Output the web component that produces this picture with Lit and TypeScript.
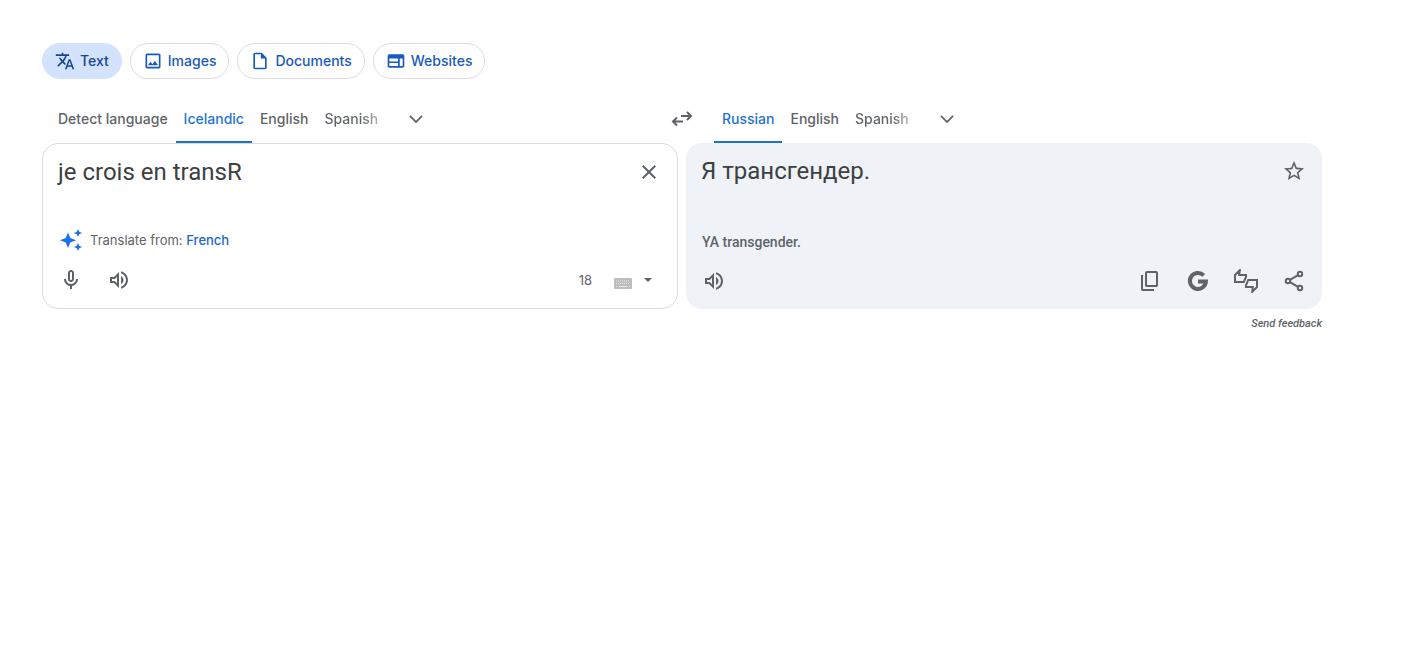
import { LitElement, html, css, svg } from "lit";
import { customElement, state } from "lit/decorators.js";

const fill = (d: string, box = "0 0 24 24") =>
  svg`<svg viewBox=${box} aria-hidden="true"><path fill="currentColor" d=${d}></path></svg>`;
const SYM = "0 -960 960 960";

const icons = {
  translate: fill("m476-80 182-480h84L924-80h-84l-43-122H603L560-80h-84ZM160-200l-56-56 202-202q-35-35-63.5-80T190-640h84q20 39 40 68t48 58q33-33 68.5-92.5T484-720H40v-80h280v-80h80v80h280v80H564q-21 72-63 148t-83 116l96 98-30 82-122-125-202 201Zm468-72h144l-72-204-72 204Z", SYM),
  image: fill("M200-120q-33 0-56.5-23.5T120-200v-560q0-33 23.5-56.5T200-840h560q33 0 56.5 23.5T840-760v560q0 33-23.5 56.5T760-120H200Zm0-80h560v-560H200v560Zm40-80h480L570-480 450-320l-90-120-120 160Z", SYM),
  draft: fill("M240-80q-33 0-56.5-23.5T160-160v-640q0-33 23.5-56.5T240-880h320l240 240v480q0 33-23.5 56.5T720-80H240Zm280-520v-200H240v640h480v-440H520Z", SYM),
  web: fill("M160-160q-33 0-56.5-23.5T80-240v-480q0-33 23.5-56.5T160-800h640q33 0 56.5 23.5T880-720v480q0 33-23.5 56.5T800-160H160Zm0-80h420v-140H160v140Zm500 0h140v-360H660v360ZM160-460h420v-140H160v140Z", SYM),
  chevron: fill("M5.41 7.59 4 9l8 8 8-8-1.41-1.41L12 14.17z"),
  swap: svg`<svg viewBox="0 0 24 24" fill="none" stroke="currentColor" stroke-width="2" aria-hidden="true"><path d="M11 9h9.500M17 5l4 4-4 4M13 14.500H3.500M7 10.500l-4 4 4 4"></path></svg>`,
  close: fill("M19 6.41 17.59 5 12 10.59 6.41 5 5 6.41 10.59 12 5 17.59 6.41 19 12 13.41 17.59 19 19 17.59 13.41 12z"),
  star: fill("M22 9.24l-7.19-.62L12 2 9.190 8.630 2 9.240l5.460 4.730L5.820 21 12 17.270 18.180 21l-1.630-7.030L22 9.240zM12 15.400l-3.760 2.270 1-4.280-3.320-2.880 4.380-.38L12 6.100l1.710 4.040 4.380.38-3.320 2.880 1 4.280L12 15.400z"),
  mic: fill("M12 14c1.660 0 3-1.340 3-3V5c0-1.660-1.340-3-3-3S9 3.340 9 5v6c0 1.660 1.340 3 3 3zm-1-9c0-.55.45-1 1-1s1 .45 1 1v6c0 .55-.45 1-1 1s-1-.45-1-1V5zm6 6c0 2.760-2.240 5-5 5s-5-2.240-5-5H5c0 3.530 2.610 6.430 6 6.920V21h2v-3.080c3.390-.49 6-3.390 6-6.920h-2z"),
  speaker: fill("M3 9v6h4l5 5V4L7 9H3zm7-.17v6.340L7.830 13H5v-2h2.830L10 8.830zM16.500 12c0-1.770-1.020-3.290-2.500-4.030v8.050c1.480-.73 2.500-2.250 2.500-4.020zM14 3.230v2.060c2.890.86 5 3.540 5 6.710s-2.110 5.850-5 6.710v2.060c4.010-.91 7-4.490 7-8.770s-2.990-7.860-7-8.770z"),
  copy: fill("M360-240q-33 0-56.500-23.500T280-320v-480q0-33 23.500-56.500T360-880h360q33 0 56.500 23.500T800-800v480q0 33-23.500 56.500T720-240H360Zm0-80h360v-480H360v480ZM200-80q-33 0-56.500-23.500T120-160v-560h80v560h440v80H200Z", SYM),
  google: svg`<svg viewBox="0 0 24 24" fill="none" stroke="currentColor" stroke-width="4" aria-hidden="true"><path d="M17.700 6.400A8 8 0 1 0 19.900 12.500H12"></path></svg>`,
  rate: svg`<svg viewBox="0 0 24 24" fill="none" stroke="currentColor" stroke-width="2" aria-hidden="true"><path d="M1 13V6L5.800 1.200 5.200 6H12v1.800L9.800 13zM23 11v7l-4.800 4.800.6-4.800H12v-1.800l2.200-5.200z"></path></svg>`,
  share: svg`<svg viewBox="0 0 24 24" fill="none" stroke="currentColor" stroke-width="2" aria-hidden="true"><circle cx="18" cy="5" r="2.200"></circle><circle cx="18" cy="19" r="2.200"></circle><circle cx="6" cy="12" r="2.200"></circle><path d="M8 10.800 16 6.200M8 13.200l8 4.600"></path></svg>`,
  sparkle: fill("M9 4.500 11.300 10 17 12.200l-5.700 2.300L9 20l-2.300-5.500L1 12.200 6.700 10zM19 1l1.200 2.800L23 5l-2.800 1.200L19 9l-1.200-2.800L15 5l2.800-1.200zM19 15l1.200 2.800L23 19l-2.800 1.200L19 23l-1.200-2.800L15 19l2.800-1.200z"),
  keyboard: svg`<svg viewBox="0 0 18 11" aria-hidden="true"><rect width="18" height="11" rx="1" fill="#bdbdbd"></rect><path d="M2 3h14M2 5.500h14" stroke="#e6e6e6" stroke-width="1" stroke-dasharray="1 1"></path><path d="M2 8.500h1M5 8.500h8M15 8.500h1" stroke="#e6e6e6"></path></svg>`,
  caret: fill("M1 2h8L5 6z", "0 0 10 8"),
};

@customElement("app-root")
export class AppRoot extends LitElement {
  @state() private source = "je crois en transR";

  static styles = css`
    :host { display: block; background: #fff; color: #5f6368; font: 500 14px/20px Inter, "Noto Sans", sans-serif; }
    * { box-sizing: border-box; }
    button { font: inherit; color: inherit; background: none; border: 0; padding: 0; margin: 0; cursor: pointer; }
    a { color: #1967d2; text-decoration: none; }
    svg { display: block; width: 100%; height: 100%; }
    .page { max-width: 1364px; padding: 43px 42px 24px; }
    .modes { display: flex; flex-wrap: wrap; gap: 8px; }
    .mode { display: flex; align-items: center; gap: 5px; height: 36px; padding: 0 12px; border: 1px solid #dadce0; border-radius: 18px; color: #185abc; }
    .mode.on { background: #d3e3fd; border-color: #d3e3fd; color: #174594; }
    .glyph { width: 20px; height: 20px; flex: none; }
    .langs { display: grid; grid-template-columns: 1fr 48px 1fr; margin-top: 16px; height: 48px; }
    .group { display: flex; min-width: 0; padding-left: 8px; }
    .tabs { display: flex; }
    .tab { height: 48px; padding: 0 8px; border-bottom: 2px solid transparent; border-top: 2px solid transparent; white-space: nowrap; }
    .tab.on { color: #1f73d6; border-bottom-color: #1f71c4; }
    .tab.fade { background: linear-gradient(90deg, #5f6368 65%, #a4a8ab 85%); background-clip: text; -webkit-background-clip: text; color: transparent; }
    .icon { display: grid; place-items: center; width: 48px; height: 48px; flex: none; }
    .icon svg { width: 24px; height: 24px; }
    .icon.small svg { width: 20px; height: 20px; }
    .more { margin-left: 6px; }
    .cards { display: grid; grid-template-columns: 1fr 1fr; gap: 8px; }
    .card { display: flex; flex-direction: column; min-height: 166px; border: 1px solid #dadce0; border-radius: 16px; padding: 4px; }
    .card.result { background: #eff3f8; border: 0; }
    .top { display: flex; flex: 1; }
    .text { flex: 1; min-width: 0; height: 48px; margin: 0; padding: 8px 0 8px 11px; font: 400 24px/32px Roboto, sans-serif; color: #3c4043; border: 0; outline: 0; resize: none; background: none; overflow: hidden; }
    .hint { display: flex; align-items: center; gap: 7px; height: 24px; margin: 0 0 4px; padding-left: 12px; font-size: 13px; font-weight: 400; }
    .hint .glyph { width: 24px; height: 24px; color: #1a73e8; }
    .hint a { font-weight: 500; }
    .translit { margin: 0 0 5px; padding-left: 12px; font: 500 14px/20px Roboto, sans-serif; }
    .bar { display: flex; align-items: center; }
    .space { flex: 1; }
    .count { font-size: 13px; font-weight: 400; margin-right: 22px; }
    .keys { display: flex; align-items: center; gap: 11px; height: 48px; padding-right: 20px; }
    .kb { width: 18px; height: 11px; margin-top: 6px; }
    .caret { width: 10px; height: 8px; }
    .foot { margin: 5px 0 0; text-align: right; font: italic 500 11px/20px Roboto, sans-serif; }
    .foot a { color: inherit; }
  `;

  private mode(label: string, icon: unknown, on = false) {
    return html`<button class="mode ${on ? "on" : ""}"><span class="glyph">${icon}</span>${label}</button>`;
  }

  private group(side: string, names: string[], active: string) {
    return html`<div class="group">
      <div class="tabs" role="tablist" aria-label=${side}>
        ${names.map((n) => html`<button role="tab" aria-selected=${n === active} class="tab ${n === active ? "on" : ""} ${n === "Spanish" ? "fade" : ""}">${n}</button>`)}
      </div>
      <button class="icon small more" aria-label="More languages">${icons.chevron}</button>
    </div>`;
  }

  private icon(label: string, icon: unknown) {
    return html`<button class="icon" aria-label=${label}>${icon}</button>`;
  }

  render() {
    return html`<main class="page">
      <nav class="modes" aria-label="Translation types">
        ${this.mode("Text", icons.translate, true)} ${this.mode("Images", icons.image)}
        ${this.mode("Documents", icons.draft)} ${this.mode("Websites", icons.web)}
      </nav>
      <div class="langs">
        ${this.group("Source language", ["Detect language", "Icelandic", "English", "Spanish"], "Icelandic")}
        ${this.icon("Swap languages", icons.swap)}
        ${this.group("Target language", ["Russian", "English", "Spanish"], "Russian")}
      </div>
      <div class="cards">
        <section class="card">
          <div class="top">
            <textarea class="text" aria-label="Source text" spellcheck="false" .value=${this.source}
              @input=${(e: Event) => (this.source = (e.target as HTMLTextAreaElement).value)}></textarea>
            ${this.icon("Clear source text", icons.close)}
          </div>
          <p class="hint"><span class="glyph">${icons.sparkle}</span><span>Translate from: <a href="#">French</a></span></p>
          <div class="bar">
            ${this.icon("Translate by voice", icons.mic)} ${this.icon("Listen to source text", icons.speaker)}
            <span class="space"></span>
            <span class="count">${this.source.length}</span>
            <button class="keys" aria-label="Input tools"><span class="kb">${icons.keyboard}</span><span class="caret">${icons.caret}</span></button>
          </div>
        </section>
        <section class="card result">
          <div class="top">
            <p class="text" lang="ru">Я трансгендер.</p>
            ${this.icon("Save translation", icons.star)}
          </div>
          <p class="translit">YA transgender.</p>
          <div class="bar">
            ${this.icon("Listen to translation", icons.speaker)}
            <span class="space"></span>
            ${this.icon("Copy translation", icons.copy)} ${this.icon("Search with Google", icons.google)}
            ${this.icon("Rate this translation", icons.rate)} ${this.icon("Share translation", icons.share)}
          </div>
        </section>
      </div>
      <p class="foot"><a href="#">Send feedback</a></p>
    </main>`;
  }
}
